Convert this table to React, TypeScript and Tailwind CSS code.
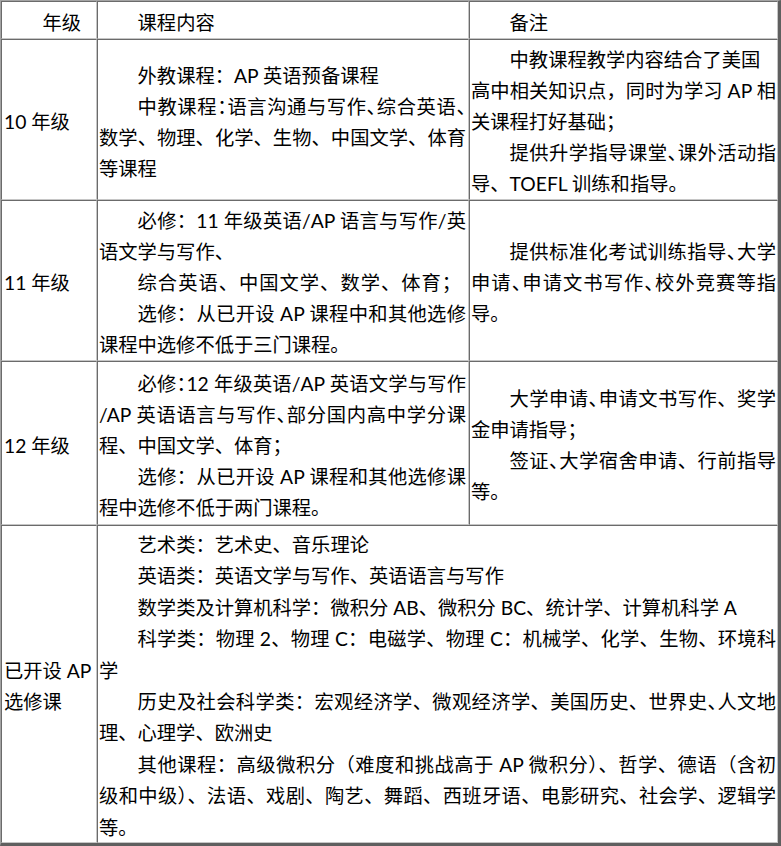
import React from "react";

type LProps = { children: React.ReactNode; i?: boolean; j?: boolean; className?: string };

const L = ({ children, i, j, className }: LProps) => (
  <div
    className={
      (i ? "indent-[2em] " : "") +
      (j ? "text-justify [text-align-last:justify] " : "text-left ") +
      (className ?? "")
    }
  >
    {children}
  </div>
);

const H = ({ children }: { children: React.ReactNode }) => (
  <span className="tracking-[-0.5em]">{children}</span>
);

const Cell = ({ children, className }: { children?: React.ReactNode; className?: string }) => (
  <div
    className={
      "flex flex-col justify-center border border-t-[#6b6b6b] border-l-[#6b6b6b] border-r-[#c6c6c6] border-b-[#c6c6c6] pt-[4px] " +
      (className ?? "")
    }
  >
    {children}
  </div>
);

export default function App() {
  return (
    <div className="w-[781px] h-[846px] bg-white text-black font-['Lato','Noto_Sans_CJK_SC',sans-serif] text-[19.3px] leading-[31px]">
      <div className="grid grid-cols-[96px_372px_309px] grid-rows-[38px_161px_161px_164px_318px] border-l border-t border-l-[#a3a3a3] border-t-[#a3a3a3] border-r-[3px] border-b-[3px] border-r-[#5f5f5f] border-b-[#5f5f5f]">
        {/* header */}
        <Cell className="pl-[2px] pr-[1px]">
          <L i>年级</L>
        </Cell>
        <Cell className="pl-[1px] pr-[2px]">
          <L i>课程内容</L>
        </Cell>
        <Cell className="pl-[1px] pr-[1px]">
          <L i>备注</L>
        </Cell>

        {/* 10 */}
        <Cell className="pl-[2px] pr-[1px]">
          <L>10 年级</L>
        </Cell>
        <Cell className="pl-[1px] pr-[2px]">
          <L i>外教课程：AP 英语预备课程</L>
          <L i j>
            中教课程<H>：</H>语言沟通与写作<H>、</H>综合英语<H>、</H>
          </L>
          <L j>数学、物理、化学、生物、中国文学、体育</L>
          <L>等课程</L>
        </Cell>
        <Cell className="pl-[1px] pr-[1px]">
          <L i>中教课程教学内容结合了美国</L>
          <L j>高中相关知识点，同时为学习 AP 相</L>
          <L>关课程打好基础；</L>
          <L i j>
            提供升学指导课堂<H>、</H>课外活动指
          </L>
          <L>导、TOEFL 训练和指导。</L>
        </Cell>

        {/* 11 */}
        <Cell className="pl-[2px] pr-[1px]">
          <L>11 年级</L>
        </Cell>
        <Cell className="pl-[1px] pr-[2px]">
          <L i j>必修：11 年级英语/AP 语言与写作/英</L>
          <L>语文学与写作、</L>
          <L i className="whitespace-nowrap tracking-[1px]">综合英语、中国文学、数学、体育；</L>
          <L i j>选修：从已开设 AP 课程中和其他选修</L>
          <L>课程中选修不低于三门课程。</L>
        </Cell>
        <Cell className="pl-[1px] pr-[1px]">
          <L i j>
            提供标准化考试训练指导<H>、</H>大学
          </L>
          <L j>
            申请<H>、</H>申请文书写作<H>、</H>校外竞赛等指
          </L>
          <L>导。</L>
        </Cell>

        {/* 12 */}
        <Cell className="pl-[2px] pr-[1px]">
          <L>12 年级</L>
        </Cell>
        <Cell className="pl-[1px] pr-[2px]">
          <L i j>
            必修<H>：</H>12 年级英语/AP 英语文学与写作
          </L>
          <L j>
            /AP 英语语言与写作<H>、</H>部分国内高中学分课
          </L>
          <L>程、中国文学、体育；</L>
          <L i j>选修：从已开设 AP 课程和其他选修课</L>
          <L>程中选修不低于两门课程。</L>
        </Cell>
        <Cell className="pl-[1px] pr-[1px]">
          <L i j>
            大学申请<H>、</H>申请文书写作、奖学
          </L>
          <L>金申请指导；</L>
          <L i j>
            签证<H>、</H>大学宿舍申请、行前指导
          </L>
          <L>等。</L>
        </Cell>

        {/* AP */}
        <Cell className="pl-[2px] pr-[1px]">
          <L>已开设 AP</L>
          <L>选修课</L>
        </Cell>
        <Cell className="col-span-2 pl-[1px] pr-[1px] leading-[31.4px]">
          <L i>艺术类：艺术史、音乐理论</L>
          <L i>英语类：英语文学与写作、英语语言与写作</L>
          <L i>数学类及计算机科学：微积分 AB、微积分 BC、统计学、计算机科学 A</L>
          <L i j>科学类：物理 2、物理 C：电磁学、物理 C：机械学、化学、生物、环境科</L>
          <L>学</L>
          <L i j>
            历史及社会科学类：宏观经济学、微观经济学、美国历史、世界史<H>、</H>人文地
          </L>
          <L>理、心理学、欧洲史</L>
          <L i j>其他课程：高级微积分（难度和挑战高于 AP 微积分）、哲学、德语（含初</L>
          <L j>级和中级）、法语、戏剧、陶艺、舞蹈、西班牙语、电影研究、社会学、逻辑学</L>
          <L>等。</L>
        </Cell>
      </div>
    </div>
  );
}
